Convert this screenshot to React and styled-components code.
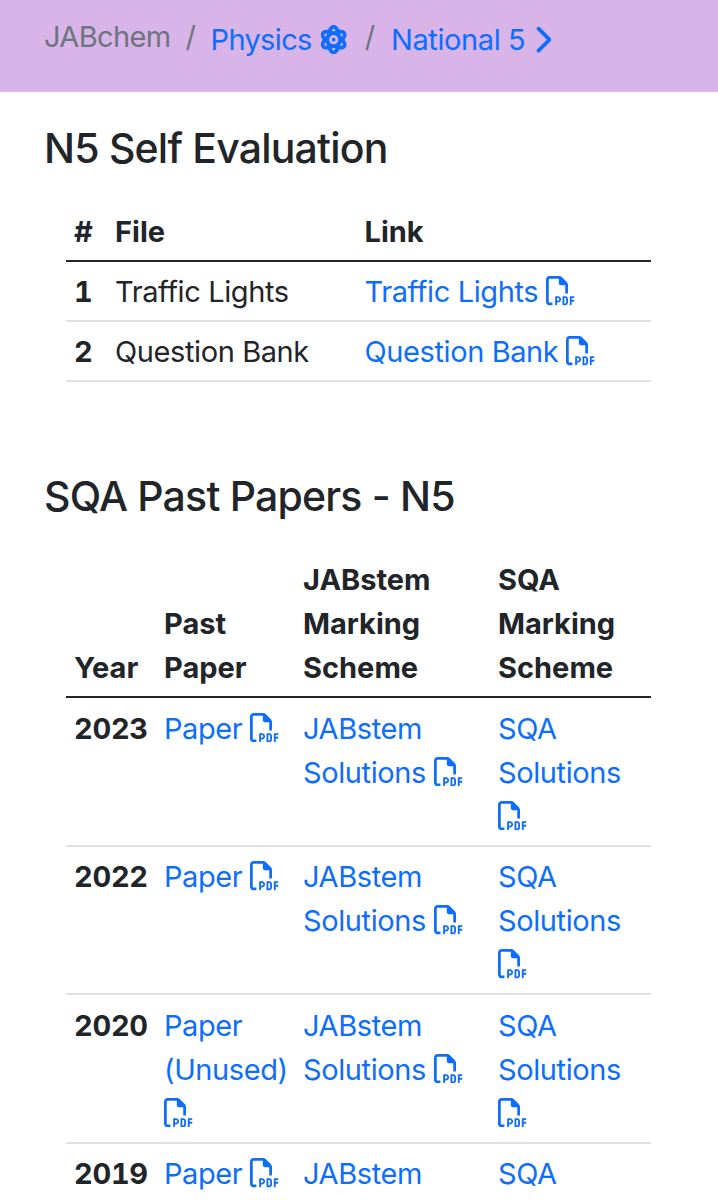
import React from "react";
import styled, { createGlobalStyle } from "styled-components";
import { FaAtom, FaChevronRight, FaRegFilePdf } from "react-icons/fa6";

const GlobalStyle = createGlobalStyle`
  *, *::before, *::after { box-sizing: border-box; }
  html, body { margin: 0; background: #fff; }
  body {
    font-family: Inter, "Liberation Sans", sans-serif;
    font-size: 29px;
    line-height: 44px;
    letter-spacing: -0.4px;
    color: #212529;
  }
`;

const Page = styled.div`
  height: 1200px;
  overflow: hidden;
`;

const Breadcrumb = styled.nav`
  display: flex;
  height: 92px;
  padding: 15px 44px 0;
  background: #d8b4e8;
  color: #6c757d;
`;

const Crumb = styled.span`
  white-space: nowrap;
  letter-spacing: -0.65px;
`;

const CrumbLink = styled.a`
  padding-top: 3px;
  white-space: nowrap;
  color: #0d6efd;
  text-decoration: none;
  letter-spacing: ${(p) => p.$tracking || "-0.4px"};
`;

const Slash = styled.span`
  padding: 0 ${(p) => p.$gap || 15}px;
`;

const Section = styled.section`
  padding: ${(p) => p.$top} 45px 0;
`;

const Title = styled.h2`
  margin: 0 0 0 -1px;
  font-size: 41px;
  font-weight: 500;
  line-height: 50px;
  letter-spacing: -0.8px;
`;

const Table = styled.table`
  width: 585px;
  margin: 29px 0 0 21px;
  border-collapse: separate;
  border-spacing: 0;
  table-layout: fixed;

  th, td {
    padding: ${(p) => p.$pad};
    text-align: left;
    vertical-align: top;
    border-bottom: 2px solid #dee2e6;
  }
  th {
    font-weight: 650;
    letter-spacing: 0;
    white-space: nowrap;
    font-variant-numeric: tabular-nums;
  }
  tbody th { letter-spacing: -0.3px; }
  thead th {
    padding: 8px 8px 6px;
    vertical-align: bottom;
    white-space: normal;
    border-bottom-color: #212529;
  }
`;

const Col = styled.col`
  width: ${(p) => p.$w}px;
`;

const Link = styled.a`
  color: #0d6efd;
  text-decoration: none;
`;

const iconBox = `
  display: inline-block;
  width: 29.33px;
  height: 29.33px;
  vertical-align: -3.7px;
`;
const PdfIcon = styled(FaRegFilePdf)`${iconBox}`;
const AtomIcon = styled(FaAtom)`
  ${iconBox}
  vertical-align: -4.2px;
`;
const ChevronIcon = styled(FaChevronRight)`
  ${iconBox}
  width: 18.33px;
  vertical-align: -4.2px;
`;

const PdfLink = ({ lines, icon = true }) => (
  <Link>
    {lines.map((line, i) => (
      <React.Fragment key={line}>
        {i > 0 && <br />}
        {line}
      </React.Fragment>
    ))}{" "}
    {icon && <PdfIcon />}
  </Link>
);

const files = ["Traffic Lights", "Question Bank"];
const papers = [
  { year: 2023, paper: ["Paper"], scheme: ["Solutions"] },
  { year: 2022, paper: ["Paper"], scheme: ["Solutions"] },
  { year: 2020, paper: ["Paper", "(Unused)"], scheme: ["Solutions"] },
  { year: 2019, paper: ["Paper"], scheme: [] },
];

export default function App() {
  return (
    <Page>
      <GlobalStyle />
      <Breadcrumb>
        <Crumb>JABchem</Crumb>
        <Slash>/</Slash>
        <CrumbLink $tracking="-0.65px">Physics <AtomIcon /></CrumbLink>
        <Slash $gap={16.2}>/</Slash>
        <CrumbLink>National 5 <ChevronIcon /></CrumbLink>
      </Breadcrumb>

      <Section $top="31px">
        <Title>N5 Self Evaluation</Title>
        <Table $pad="8px 8px 6px">
          <colgroup>
            <Col $w={41} /><Col $w={249.5} /><Col $w={294.5} />
          </colgroup>
          <thead>
            <tr><th>#</th><th>File</th><th>Link</th></tr>
          </thead>
          <tbody>
            {files.map((name, i) => (
              <tr key={name}>
                <th>{i + 1}</th>
                <td>{name}</td>
                <td><PdfLink lines={[name]} /></td>
              </tr>
            ))}
          </tbody>
        </Table>
      </Section>

      <Section $top="89px">
        <Title>SQA Past Papers - N5</Title>
        <Table $pad="8.5px 8px 6px">
          <colgroup>
            <Col $w={90} /><Col $w={139} /><Col $w={195} /><Col $w={161} />
          </colgroup>
          <thead>
            <tr>
              <th>Year</th>
              <th>Past<br />Paper</th>
              <th>JABstem<br />Marking<br />Scheme</th>
              <th>SQA<br />Marking<br />Scheme</th>
            </tr>
          </thead>
          <tbody>
            {papers.map(({ year, paper, scheme }) => (
              <tr key={year}>
                <th>{year}</th>
                <td><PdfLink lines={paper} /></td>
                <td><PdfLink lines={["JABstem", ...scheme]} icon={scheme.length > 0} /></td>
                <td><PdfLink lines={["SQA", ...scheme]} icon={scheme.length > 0} /></td>
              </tr>
            ))}
          </tbody>
        </Table>
      </Section>
    </Page>
  );
}
